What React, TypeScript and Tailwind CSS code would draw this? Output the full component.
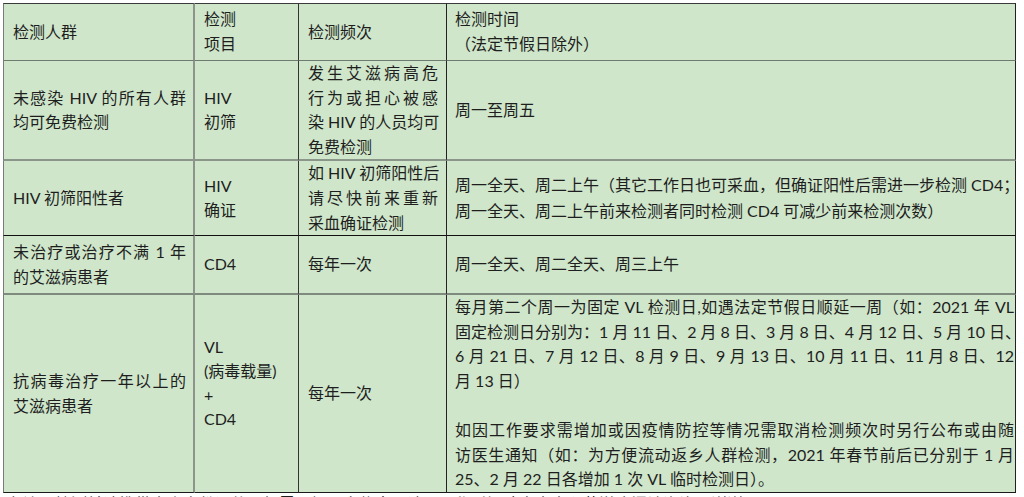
import React from 'react';

// one line stretched to the full cell width (like Word's distributed text)
const J = ({ children }: { children: React.ReactNode }) => (
  <div className="whitespace-nowrap [text-align-last:justify]">{children}</div>
);

const L = ({ children }: { children?: React.ReactNode }) => (
  <div className="whitespace-nowrap">{children ?? '\u00a0'}</div>
);

const c1 = 'border-l border-l-[#7a7a7a] border-r-2 border-r-[#8c948c] pl-[9px] pr-[7px] py-0';
const c2 = 'border-r border-r-[#333] pl-[9px] pr-[4px] py-0';
const c3 = 'border-r border-r-[#222] pl-[9px] pr-[8px] py-0';
const c4 = 'border-r border-r-[#222] pl-[8px] pr-[1px] py-0';

const App: React.FC = () => {
  return (
    <div className="min-h-screen bg-white pt-[3px] pl-[3px] font-['Lato','Noto_Sans_CJK_SC',sans-serif] text-[16px] leading-[24.6px] text-[#1e1e1e]">
      <table className="table-fixed w-[1013px] border-separate border-spacing-0 bg-[#cfe6ca]">
        <colgroup>
          <col className="w-[192px]" />
          <col className="w-[104px]" />
          <col className="w-[148px]" />
          <col className="w-[569px]" />
        </colgroup>
        <tbody>
          {/* header */}
          <tr>
            <td className={`${c1} h-[58px] border-t border-t-[#3a3a3a] border-b border-b-[#6f7a6f]`}>检测人群</td>
            <td className={`${c2} h-[58px] border-t border-t-[#3a3a3a] border-b border-b-[#6f7a6f]`}>
              <L>检测</L>
              <L>项目</L>
            </td>
            <td className={`${c3} h-[58px] border-t border-t-[#3a3a3a] border-b border-b-[#6f7a6f]`}>检测频次</td>
            <td className={`${c4} h-[58px] border-t border-t-[#3a3a3a] border-b border-b-[#6f7a6f]`}>
              <L>检测时间</L>
              <L>（法定节假日除外）</L>
            </td>
          </tr>

          <tr>
            <td className={`${c1} h-[100px] border-b-2 border-b-[#8a968a]`}>
              <J>未感染 HIV 的所有人群</J>
              <L>均可免费检测</L>
            </td>
            <td className={`${c2} h-[100px] border-b-2 border-b-[#8a968a]`}>
              <L>HIV</L>
              <L>初筛</L>
            </td>
            <td className={`${c3} h-[100px] border-b-2 border-b-[#8a968a]`}>
              <J>发生艾滋病高危</J>
              <J>行为或担心被感</J>
              <J>染 HIV 的人员均可</J>
              <L>免费检测</L>
            </td>
            <td className={`${c4} h-[100px] border-b-2 border-b-[#8a968a]`}>周一至周五</td>
          </tr>

          <tr>
            <td className={`${c1} h-[74px] border-b border-b-[#111]`}>HIV 初筛阳性者</td>
            <td className={`${c2} h-[74px] border-b border-b-[#111]`}>
              <L>HIV</L>
              <L>确证</L>
            </td>
            <td className={`${c3} h-[74px] border-b border-b-[#111]`}>
              <J>如 HIV 初筛阳性后</J>
              <J>请尽快前来重新</J>
              <L>采血确证检测</L>
            </td>
            <td className={`${c4} h-[74px] border-b border-b-[#111] leading-[26px]`}>
              <J>周一全天、周二上午（其它工作日也可采血，但确证阳性后需进一步检测 CD4；</J>
              <L>周一全天、周二上午前来检测者同时检测 CD4 可减少前来检测次数）</L>
            </td>
          </tr>

          <tr>
            <td className={`${c1} h-[59px] border-b-2 border-b-[#7f8a7f]`}>
              <J>未治疗或治疗不满 1 年</J>
              <L>的艾滋病患者</L>
            </td>
            <td className={`${c2} h-[59px] border-b-2 border-b-[#7f8a7f]`}>CD4</td>
            <td className={`${c3} h-[59px] border-b-2 border-b-[#7f8a7f]`}>每年一次</td>
            <td className={`${c4} h-[59px] border-b-2 border-b-[#7f8a7f]`}>周一全天、周二全天、周三上午</td>
          </tr>

          <tr>
            <td className={`${c1} h-[198px] border-b border-b-[#1a1a1a]`}>
              <J>抗病毒治疗一年以上的</J>
              <L>艾滋病患者</L>
            </td>
            <td className={`${c2} h-[198px] border-b border-b-[#1a1a1a] leading-[24px]`}>
              <div className="pb-[22px]">
                <L>VL</L>
                <L>(病毒载量)</L>
                <L>+</L>
                <L>CD4</L>
              </div>
            </td>
            <td className={`${c3} h-[198px] border-b border-b-[#1a1a1a]`}>每年一次</td>
            <td className={`${c4} h-[198px] border-b border-b-[#1a1a1a]`}>
              <J>每月第二个周一为固定 VL 检测日,如遇法定节假日顺延一周（如：2021 年 VL</J>
              <J>固定检测日分别为：1 月 11 日、2 月 8 日、3 月 8 日、4 月 12 日、5 月 10 日、</J>
              <J>6 月 21 日、7 月 12 日、8 月 9 日、9 月 13 日、10 月 11 日、11 月 8 日、12</J>
              <L>月 13 日）</L>
              <L />
              <J>如因工作要求需增加或因疫情防控等情况需取消检测频次时另行公布或由随</J>
              <J>访医生通知（如：为方便流动返乡人群检测，2021 年春节前后已分别于 1 月</J>
              <L>25、2 月 22 日各增加 1 次 VL 临时检测日）。</L>
            </td>
          </tr>
        </tbody>
      </table>
      <p className="pt-[3px] pl-[4px] leading-[16px] whitespace-nowrap">
        备注：检测前请携带本人身份证件，如需了解更多信息，请于工作时间致电本中心艾滋病门诊咨询，谢谢。
      </p>
    </div>
  );
};

export default App;
